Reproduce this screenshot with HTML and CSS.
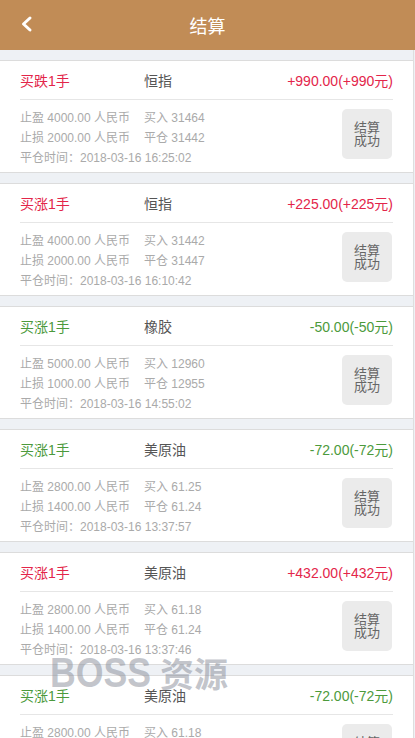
FILE: index.html
```html
<!DOCTYPE html>
<html lang="zh-CN">

<head>
  <meta charset="UTF-8">
  <meta name="viewport" content="width=device-width, initial-scale=1.0">
  <title>结算</title>
  <link rel="stylesheet" href="styles.css">
</head>

<body>
  <header class="topbar">
    <a class="back" href="#">
      <svg width="16" height="20" viewBox="0 0 16 20">
        <polyline points="13,4 6.5,10 13,16" fill="none" stroke="#fff" stroke-width="3" stroke-linecap="round" stroke-linejoin="round" />
      </svg>
    </a>
    <h1>结算</h1>
  </header>

  <div class="list">
    <article class="card">
      <div class="card-head">
        <span class="col up">买跌1手</span>
        <span class="name">恒指</span>
        <span class="profit up">+990.00(+990元)</span>
      </div>
      <div class="card-body">
        <div class="info">
          <p><span class="col">止盈 4000.00 人民币</span>买入 31464</p>
          <p><span class="col">止损 2000.00 人民币</span>平仓 31442</p>
          <p>平仓时间：2018-03-16 16:25:02</p>
        </div>
        <button class="state">结算<br>成功</button>
      </div>
    </article>

    <article class="card">
      <div class="card-head">
        <span class="col up">买涨1手</span>
        <span class="name">恒指</span>
        <span class="profit up">+225.00(+225元)</span>
      </div>
      <div class="card-body">
        <div class="info">
          <p><span class="col">止盈 4000.00 人民币</span>买入 31442</p>
          <p><span class="col">止损 2000.00 人民币</span>平仓 31447</p>
          <p>平仓时间：2018-03-16 16:10:42</p>
        </div>
        <button class="state">结算<br>成功</button>
      </div>
    </article>

    <article class="card">
      <div class="card-head">
        <span class="col down">买涨1手</span>
        <span class="name">橡胶</span>
        <span class="profit down">-50.00(-50元)</span>
      </div>
      <div class="card-body">
        <div class="info">
          <p><span class="col">止盈 5000.00 人民币</span>买入 12960</p>
          <p><span class="col">止损 1000.00 人民币</span>平仓 12955</p>
          <p>平仓时间：2018-03-16 14:55:02</p>
        </div>
        <button class="state">结算<br>成功</button>
      </div>
    </article>

    <article class="card">
      <div class="card-head">
        <span class="col down">买涨1手</span>
        <span class="name">美原油</span>
        <span class="profit down">-72.00(-72元)</span>
      </div>
      <div class="card-body">
        <div class="info">
          <p><span class="col">止盈 2800.00 人民币</span>买入 61.25</p>
          <p><span class="col">止损 1400.00 人民币</span>平仓 61.24</p>
          <p>平仓时间：2018-03-16 13:37:57</p>
        </div>
        <button class="state">结算<br>成功</button>
      </div>
    </article>

    <article class="card">
      <div class="card-head">
        <span class="col up">买涨1手</span>
        <span class="name">美原油</span>
        <span class="profit up">+432.00(+432元)</span>
      </div>
      <div class="card-body">
        <div class="info">
          <p><span class="col">止盈 2800.00 人民币</span>买入 61.18</p>
          <p><span class="col">止损 1400.00 人民币</span>平仓 61.24</p>
          <p>平仓时间：2018-03-16 13:37:46</p>
        </div>
        <button class="state">结算<br>成功</button>
      </div>
    </article>

    <article class="card">
      <div class="card-head">
        <span class="col down">买涨1手</span>
        <span class="name">美原油</span>
        <span class="profit down">-72.00(-72元)</span>
      </div>
      <div class="card-body">
        <div class="info">
          <p><span class="col">止盈 2800.00 人民币</span>买入 61.18</p>
          <p><span class="col">止损 1400.00 人民币</span>平仓 61.24</p>
          <p>平仓时间：2018-03-16 13:37:35</p>
        </div>
        <button class="state">结算<br>成功</button>
      </div>
    </article>
  </div>

  <div class="watermark"><span class="wm-en">BOSS</span><span class="wm-cn">资源</span></div>
</body>

</html>
```

FILE: styles.css
```css
* {
  margin: 0;
  padding: 0;
  box-sizing: border-box;
}

body {
  font-family: "Liberation Sans", "Noto Sans CJK SC", sans-serif;
  background: #eef1f5;
}

.topbar {
  height: 50px;
  background: #c18c56;
  display: flex;
  align-items: center;
  justify-content: center;
  position: relative;
}

.topbar h1 {
  font-size: 18px;
  font-weight: normal;
  color: #fff;
}

.back {
  position: absolute;
  left: 17px;
  top: 14px;
  display: block;
  width: 16px;
  height: 20px;
}

.list {
  padding-top: 10px;
  margin-right: 1px;
  border-right: 1px solid #dedede;
}

.card {
  background: #fff;
  border-top: 1px solid #dcdcdc;
  border-bottom: 1px solid #dcdcdc;
  margin-bottom: 10px;
}

.col {
  display: inline-block;
  width: 124px;
}

.card-head {
  display: flex;
  height: 39px;
  padding-top: 2px;
  line-height: 36px;
  margin: 0 20px;
  border-bottom: 1px solid #e6e6e6;
  font-size: 14px;
}

.card-head .name {
  color: #555;
  flex: 1;
}

.up {
  color: #e3254a;
}

.down {
  color: #4c9a3c;
}

.card-body {
  display: flex;
  justify-content: space-between;
  align-items: flex-start;
  padding: 8px 20px 4px 20px;
}

.info p {
  font-size: 12px;
  line-height: 20px;
  color: #aaa;
}

.state {
  width: 50px;
  height: 50px;
  margin-top: 1px;
  margin-right: 1px;
  border: none;
  border-radius: 5px;
  background: #ebebeb;
  color: #666;
  font-family: inherit;
  font-size: 13px;
  line-height: 13px;
}

.watermark {
  position: absolute;
  left: 50px;
  top: 652px;
  display: flex;
  align-items: baseline;
  gap: 10px;
  color: rgba(135, 140, 152, 0.5);
  font-weight: bold;
  line-height: 42px;
  white-space: nowrap;
  pointer-events: none;
}

.wm-en {
  display: inline-block;
  width: 100px;
  font-size: 42px;
  transform: scaleX(0.85);
  transform-origin: left center;
}

.wm-cn {
  font-size: 34px;
}
```
